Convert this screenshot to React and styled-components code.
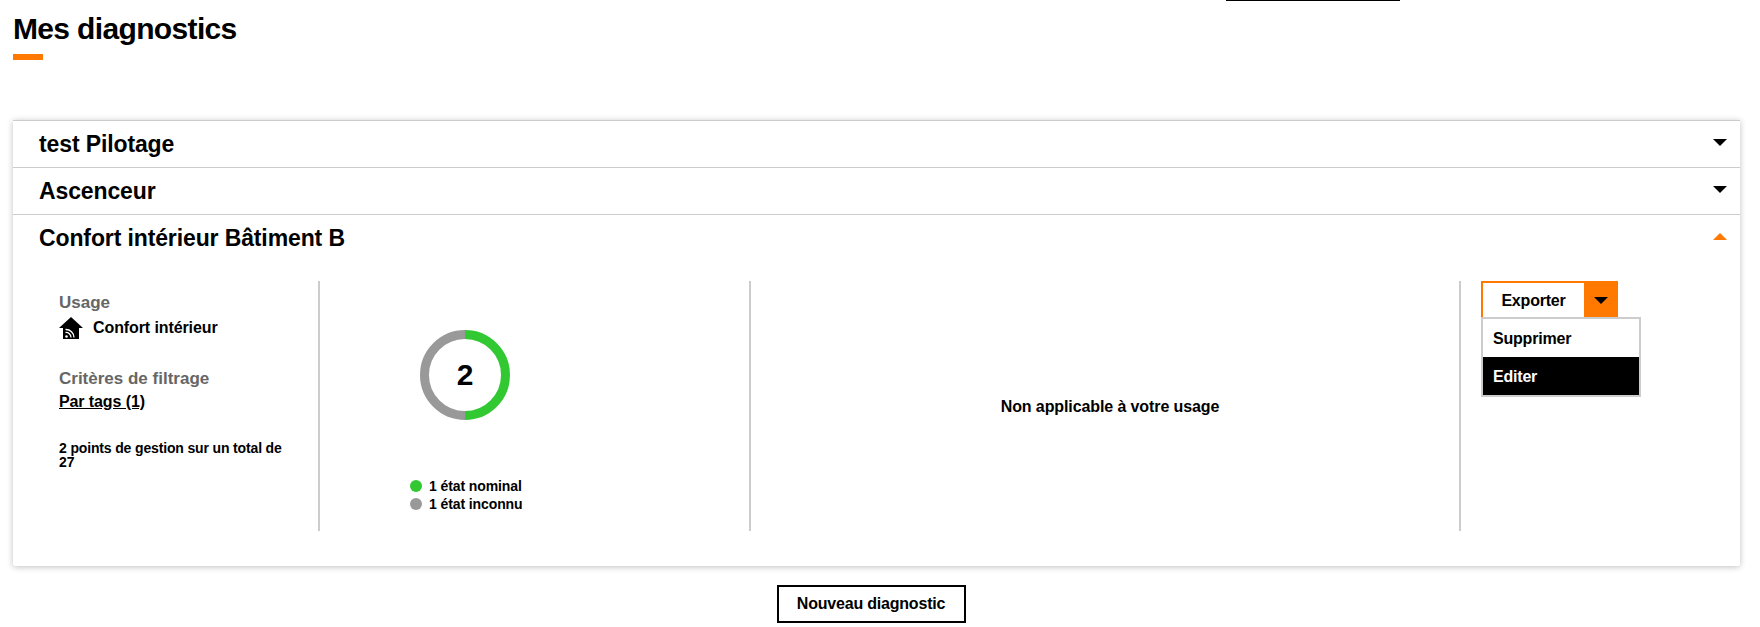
import React from "react";
import styled, { createGlobalStyle } from "styled-components";

const GlobalStyle = createGlobalStyle`
  html, body {
    margin: 0;
    padding: 0;
    background: #fff;
    color: #000;
    font-family: "Liberation Sans", Arial, sans-serif;
    font-weight: 700;
  }
`;

const Page = styled.div`
  width: 1760px;
  height: 627px;
  overflow: hidden;
`;
const TopLine = styled.div`
  width: 174px;
  height: 1px;
  margin-left: 1226px;
  background: #000;
`;
const Title = styled.h1`
  margin: 0 0 0 13px;
  padding-top: 12px;
  font-size: 30px;
  line-height: 32px;
  letter-spacing: -0.65px;
`;
const TitleBar = styled.div`
  width: 30px;
  height: 6px;
  margin: 9px 0 0 13px;
  background: #ff7900;
`;
const Card = styled.section`
  margin: 60px 20px 0 13px;
  background: #fff;
  border-top: 1px solid #ccc;
  box-shadow: 0 1px 6px rgba(0, 0, 0, 0.25);
  border-radius: 0 0 2px 2px;
`;
const Row = styled.div`
  display: flex;
  align-items: center;
  justify-content: space-between;
  height: 46px;
  padding: 0 13px 0 26px;
  border-bottom: ${(p) => (p.$open ? "none" : "1px solid #ccc")};
  font-size: 23px;
  letter-spacing: -0.12px;
`;
const Arrow = styled.span`
  width: 0;
  height: 0;
  border-left: 7px solid transparent;
  border-right: 7px solid transparent;
  ${(p) =>
    p.$up
      ? "border-bottom: 7px solid #ff7900;"
      : "border-top: 7px solid #000;"}
`;
const RowArrow = styled(Arrow)`
  margin-bottom: 4px;
`;
const Body = styled.div`
  display: grid;
  grid-template-columns: 307px 431px 710px 1fr;
  height: 305px;
  padding-top: 20px;
  box-sizing: border-box;
`;
const Column = styled.div`
  height: 250px;
  box-sizing: border-box;
  border-right: ${(p) => (p.$last ? "none" : "2px solid #ccc")};
`;
const InfoColumn = styled(Column)`
  padding: 12px 30px 0 20px;
  margin-left: 26px;
  width: 281px;
  font-size: 16px;
`;
const Label = styled.div`
  font-size: 17px;
  line-height: 20px;
  color: #666;
`;
const UsageLine = styled.div`
  display: flex;
  align-items: center;
  gap: 10px;
  height: 24px;
  margin-top: 3px;
  margin-bottom: 29px;
  letter-spacing: -0.1px;
`;
const TagsLink = styled.a`
  display: block;
  margin-top: 5px;
  color: #000;
  line-height: 16px;
  text-decoration: underline;
  letter-spacing: -0.1px;
`;
const Total = styled.p`
  margin: 31px 0 0;
  font-size: 14px;
  line-height: 14px;
  letter-spacing: -0.15px;
`;
const ChartColumn = styled(Column)`
  display: flex;
  flex-direction: column;
  align-items: flex-start;
  padding: 49px 0 0 100px;
`;
const Donut = styled.div`
  position: relative;
  width: 90px;
  height: 90px;
`;
const DonutValue = styled.div`
  position: absolute;
  inset: 0;
  display: flex;
  align-items: center;
  justify-content: center;
  font-size: 30px;
`;
const Legend = styled.div`
  margin: 57px 0 0 -10px;
`;
const LegendRow = styled.div`
  display: flex;
  align-items: center;
  gap: 7px;
  height: 18px;
  font-size: 14px;
  letter-spacing: -0.1px;
`;
const Dot = styled.span`
  width: 12px;
  height: 12px;
  border-radius: 50%;
  background: ${(p) => p.$color};
`;
const MiddleColumn = styled(Column)`
  display: flex;
  align-items: center;
  justify-content: center;
  padding: 2px 0 0 10px;
  font-size: 16px;
  letter-spacing: -0.1px;
`;
const ActionColumn = styled(Column)`
  position: relative;
  padding-left: 20px;
`;
const SplitButton = styled.div`
  display: flex;
  width: 137px;
  height: 36px;
  box-sizing: border-box;
  border: 2px solid #ff7900;
  border-bottom: none;
  font-size: 16px;
  letter-spacing: -0.2px;
`;
const SplitLabel = styled.div`
  flex: 1;
  display: flex;
  align-items: center;
  justify-content: center;
  padding-top: 2px;
`;
const SplitCaret = styled.div`
  display: flex;
  align-items: center;
  justify-content: center;
  width: 34px;
  margin-right: -2px;
  background: #ff7900;
`;
const Menu = styled.div`
  position: absolute;
  top: 36px;
  left: 20px;
  width: 160px;
  box-sizing: border-box;
  border: 2px solid #ccc;
  background: #fff;
  font-size: 16px;
  letter-spacing: -0.2px;
`;
const MenuItem = styled.div`
  display: flex;
  align-items: center;
  height: 38px;
  box-sizing: border-box;
  padding: 2px 0 0 10px;
  background: ${(p) => (p.$active ? "#000" : "#fff")};
  color: ${(p) => (p.$active ? "#fff" : "#000")};
`;
const Footer = styled.div`
  display: flex;
  justify-content: center;
  margin-top: 19px;
  padding-right: 18px;
`;
const NewButton = styled.button`
  width: 189px;
  height: 38px;
  padding: 0;
  border: 2px solid #000;
  background: #fff;
  color: #000;
  font: inherit;
  font-size: 16px;
  letter-spacing: -0.2px;
`;

function HouseIcon() {
  return (
    <svg width="24" height="24" viewBox="0 0 24 24">
      <path d="M12 1 L24 12 H20 V23 H4 V12 H0 Z" fill="#000" />
      <g fill="none" stroke="#fff" strokeWidth="1.3">
        <path d="M6.5 13.5 A8 8 0 0 1 15 21.5" />
        <path d="M6.5 16.5 A5 5 0 0 1 12 21.5" />
      </g>
      <circle cx="7.5" cy="20.5" r="1.3" fill="#fff" />
    </svg>
  );
}

function StateDonut() {
  return (
    <svg width="90" height="90" viewBox="0 0 90 90">
      <path d="M45 4.5 A40.5 40.5 0 0 1 45 85.5" fill="none" stroke="#32c832" strokeWidth="9" />
      <path d="M45 85.5 A40.5 40.5 0 0 1 45 4.5" fill="none" stroke="#999" strokeWidth="9" />
    </svg>
  );
}

export default function App() {
  return (
    <Page>
      <GlobalStyle />
      <TopLine />
      <Title>Mes diagnostics</Title>
      <TitleBar />
      <Card>
        <Row>
          test Pilotage
          <RowArrow />
        </Row>
        <Row>
          Ascenceur
          <RowArrow />
        </Row>
        <Row $open>
          Confort intérieur Bâtiment B
          <RowArrow $up />
        </Row>
        <Body>
          <InfoColumn>
            <Label>Usage</Label>
            <UsageLine>
              <HouseIcon />
              Confort intérieur
            </UsageLine>
            <Label>Critères de filtrage</Label>
            <TagsLink>Par tags (1)</TagsLink>
            <Total>2 points de gestion sur un total de 27</Total>
          </InfoColumn>
          <ChartColumn>
            <Donut>
              <StateDonut />
              <DonutValue>2</DonutValue>
            </Donut>
            <Legend>
              <LegendRow>
                <Dot $color="#32c832" />1 état nominal
              </LegendRow>
              <LegendRow>
                <Dot $color="#999" />1 état inconnu
              </LegendRow>
            </Legend>
          </ChartColumn>
          <MiddleColumn>Non applicable à votre usage</MiddleColumn>
          <ActionColumn $last>
            <SplitButton>
              <SplitLabel>Exporter</SplitLabel>
              <SplitCaret>
                <Arrow />
              </SplitCaret>
            </SplitButton>
            <Menu>
              <MenuItem>Supprimer</MenuItem>
              <MenuItem $active>Editer</MenuItem>
            </Menu>
          </ActionColumn>
        </Body>
      </Card>
      <Footer>
        <NewButton>Nouveau diagnostic</NewButton>
      </Footer>
    </Page>
  );
}
